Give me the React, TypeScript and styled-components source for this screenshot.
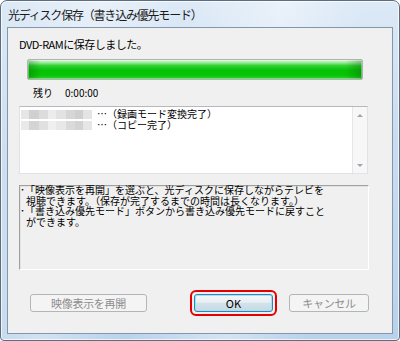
import React from "react";
import styled, { createGlobalStyle } from "styled-components";

const Global = createGlobalStyle`
  html, body { margin: 0; padding: 0; background: #ffffff; }
  body { font-family: "Noto Sans CJK JP", "Noto Sans", sans-serif; }
  * { box-sizing: border-box; }
`;

const Window = styled.div`
  width: 400px;
  height: 341px;
  border: 1px solid #5d6d7e;
  border-radius: 7px 7px 4px 4px;
  background:
    linear-gradient(100deg, rgba(255,255,255,0) 0%, rgba(255,255,255,0.35) 22%, rgba(255,255,255,0) 40%, rgba(255,255,255,0.4) 62%, rgba(255,255,255,0) 80%),
    linear-gradient(180deg, #dce9f6 0%, #c9ddf1 40%, #b9d2ec 100%);
  box-shadow: inset 0 0 0 1px rgba(255,255,255,0.7);
  display: flex;
  flex-direction: column;
  padding: 0 6px 6px 6px;
  overflow: hidden;
`;

const TitleBar = styled.div`
  height: 26px;
  display: flex;
  align-items: center;
  padding: 1px 0 0 1px;
  font-size: 12px;
  letter-spacing: -1.2px;
  color: #1b1b1b;
  white-space: nowrap;
`;

const Client = styled.div`
  flex: 1;
  border: 1px solid #8596aa;
  background: #f0f0f0;
  display: flex;
  flex-direction: column;
  color: #000;
`;

const Message = styled.div`
  margin: 9px 0 0 11px;
  height: 14px;
  line-height: 14px;
  font-size: 11px;
  letter-spacing: -0.5px;
  white-space: nowrap;
`;

const Progress = styled.div`
  margin: 8px 0 0 19px;
  width: 336px;
  height: 21px;
  border: 1px solid #b2b2b2;
  border-radius: 2px;
  background:
    linear-gradient(90deg, rgba(0,70,0,0.28) 0%, rgba(0,70,0,0) 4%, rgba(0,70,0,0) 95%, rgba(0,70,0,0.3) 100%),
    linear-gradient(180deg, #d6f8d6 0%, #9aeb9a 14%, #2fd02f 30%, #07c107 55%, #06c406 80%, #2dd52d 100%);
  box-shadow: inset 0 0 0 1px rgba(255,255,255,0.35);
`;

const RemainRow = styled.div`
  margin: 6px 0 0 25px;
  height: 14px;
  line-height: 14px;
  display: flex;
  gap: 12px;
  font-size: 10px;
  white-space: nowrap;
`;

const ListBox = styled.div`
  margin: 6px 0 0 11px;
  width: 349px;
  height: 68px;
  display: flex;
  background: #ffffff;
  border: 1px solid #dfe3e8;
  border-top-color: #b5b9be;
`;

const ListContent = styled.div`
  flex: 1;
  padding: 2px 0 0 1px;
  font-family: "Liberation Sans", "Noto Sans CJK JP", sans-serif;
  font-size: 10px;
  line-height: 11px;
`;

const ListItem = styled.div`
  display: flex;
  align-items: center;
  height: 11px;
  white-space: nowrap;
`;

const Blur = styled.div`
  display: flex;
  width: 71px;
  height: 9px;
  margin-right: 5px;
`;

const BlurCell = styled.div<{ $w: number; $shade: string }>`
  width: ${(p) => p.$w}px;
  height: 100%;
  background: ${(p) => p.$shade};
  filter: blur(0.6px);
`;

const ScrollBar = styled.div`
  width: 15px;
  display: flex;
  flex-direction: column;
  justify-content: space-between;
  align-items: center;
  background: #f7f7f7;
  border-left: 1px solid #e6e6e6;
  padding: 7px 0 6px;
`;

const Arrow = styled.div<{ $down?: boolean }>`
  width: 0;
  height: 0;
  border-left: 3px solid transparent;
  border-right: 3px solid transparent;
  ${(p) =>
    p.$down
      ? "border-top: 3px solid #a3a3a3;"
      : "border-bottom: 3px solid #a3a3a3;"}
`;

const InfoBox = styled.div`
  margin: 11px 0 0 11px;
  width: 350px;
  height: 85px;
  border: 1px solid #ffffff;
  border-top-color: #a0a0a0;
  border-left-color: #a0a0a0;
  box-shadow: inset 1px 1px 0 #e3e3e3;
  padding: 0;
  font-family: "Liberation Sans", "Noto Sans CJK JP", sans-serif;
  font-size: 10px;
  line-height: 10.7px;
  color: #000;
`;

const InfoLine = styled.div<{ $indent?: boolean }>`
  white-space: nowrap;
  padding-left: ${(p) => (p.$indent ? 6 : 0)}px;
`;

const ButtonRow = styled.div`
  margin: 20px 0 0 22px;
  display: flex;
  align-items: center;
`;

const DisabledButton = styled.button<{ $w: number }>`
  width: ${(p) => p.$w}px;
  height: 18px;
  padding: 0;
  border: 1px solid #b3b6b9;
  border-radius: 3px;
  background: #f4f4f4;
  color: #8e8e8e;
  font-family: "Noto Sans CJK JP", sans-serif;
  font-size: 11px;
  line-height: 16px;
  letter-spacing: -0.3px;
`;

const Ring = styled.div`
  margin-left: 43px;
  margin-right: 12px;
  padding: 2px;
  border: 2px solid #e40000;
  border-radius: 6px;
  display: flex;
`;

const OkButton = styled.button`
  width: 79px;
  height: 18px;
  padding: 0;
  border: 1px solid #3c7fb1;
  border-radius: 3px;
  background: linear-gradient(180deg, #f3f7f9 0%, #e7eff3 45%, #d3e2ea 52%, #c6d9e4 100%);
  box-shadow: inset 0 0 0 1px #9fe3f7;
  color: #000;
  font-family: "Noto Sans CJK JP", sans-serif;
  font-size: 11px;
  line-height: 16px;
`;

const blurRows = [
  [
    { w: 8, s: "#e6e6e6" },
    { w: 10, s: "#d0d0d0" },
    { w: 9, s: "#dcdcdc" },
    { w: 8, s: "#ececec" },
    { w: 10, s: "#e2e2e2" },
    { w: 9, s: "#d6d6d6" },
    { w: 8, s: "#cfcfcf" },
    { w: 9, s: "#e4e4e4" },
  ],
  [
    { w: 8, s: "#e9e9e9" },
    { w: 10, s: "#d4d4d4" },
    { w: 9, s: "#e0e0e0" },
    { w: 8, s: "#efefef" },
    { w: 10, s: "#e8e8e8" },
    { w: 9, s: "#dadada" },
    { w: 8, s: "#d3d3d3" },
    { w: 9, s: "#e6e6e6" },
  ],
];

const items = ["⋯（録画モード変換完了）", "⋯（コピー完了）"];

const infoLines = [
  { text: "･「映像表示を再開」を選ぶと、光ディスクに保存しながらテレビを", indent: false },
  { text: "視聴できます。（保存が完了するまでの時間は長くなります。）", indent: true },
  { text: "･「書き込み優先モード」ボタンから書き込み優先モードに戻すこと", indent: false },
  { text: "ができます。", indent: true },
];

export default function App() {
  return (
    <>
      <Global />
      <Window>
        <TitleBar>光ディスク保存（書き込み優先モード）</TitleBar>
        <Client>
          <Message>DVD-RAMに保存しました。</Message>
          <Progress />
          <RemainRow>
            <span>残り</span>
            <span>0:00:00</span>
          </RemainRow>
          <ListBox>
            <ListContent>
              {items.map((t, i) => (
                <ListItem key={i}>
                  <Blur>
                    {blurRows[i].map((c, j) => (
                      <BlurCell key={j} $w={c.w} $shade={c.s} />
                    ))}
                  </Blur>
                  <span>{t}</span>
                </ListItem>
              ))}
            </ListContent>
            <ScrollBar>
              <Arrow />
              <Arrow $down />
            </ScrollBar>
          </ListBox>
          <InfoBox>
            {infoLines.map((l, i) => (
              <InfoLine key={i} $indent={l.indent}>
                {l.text}
              </InfoLine>
            ))}
          </InfoBox>
          <ButtonRow>
            <DisabledButton $w={117} disabled>
              映像表示を再開
            </DisabledButton>
            <Ring>
              <OkButton>OK</OkButton>
            </Ring>
            <DisabledButton $w={80} disabled>
              キャンセル
            </DisabledButton>
          </ButtonRow>
        </Client>
      </Window>
    </>
  );
}
